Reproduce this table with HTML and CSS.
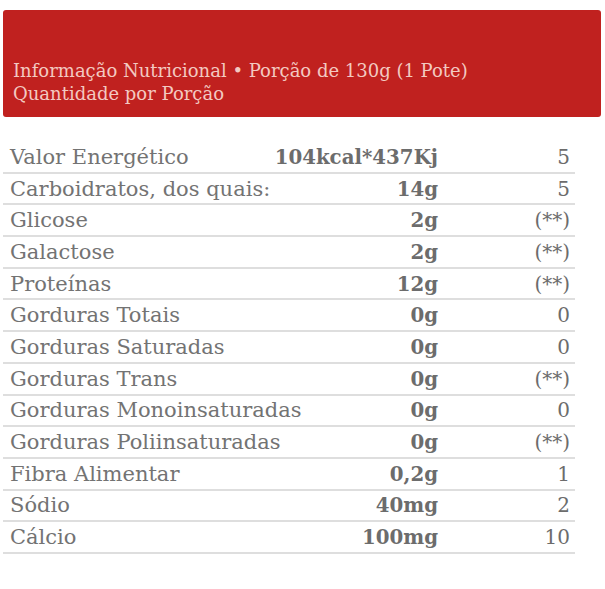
FILE: index.html
```html
<!DOCTYPE html>
<html lang="pt">
<head>
<meta charset="utf-8">
<link rel="stylesheet" href="styles.css">
</head>
<body>
<div class="panel">
  <div class="head">
    <div class="head-line">Informação Nutricional • Porção de 130g (1 Pote)</div>
    <div class="head-line">Quantidade por Porção</div>
  </div>
  <div class="rows">
    <div class="row"><span class="name">Valor Energético</span><span class="val">104kcal*437Kj</span><span class="pct">5</span></div>
    <div class="row"><span class="name">Carboidratos, dos quais:</span><span class="val">14g</span><span class="pct">5</span></div>
    <div class="row"><span class="name">Glicose</span><span class="val">2g</span><span class="pct">(**)</span></div>
    <div class="row"><span class="name">Galactose</span><span class="val">2g</span><span class="pct">(**)</span></div>
    <div class="row"><span class="name">Proteínas</span><span class="val">12g</span><span class="pct">(**)</span></div>
    <div class="row"><span class="name">Gorduras Totais</span><span class="val">0g</span><span class="pct">0</span></div>
    <div class="row"><span class="name">Gorduras Saturadas</span><span class="val">0g</span><span class="pct">0</span></div>
    <div class="row"><span class="name">Gorduras Trans</span><span class="val">0g</span><span class="pct">(**)</span></div>
    <div class="row"><span class="name">Gorduras Monoinsaturadas</span><span class="val">0g</span><span class="pct">0</span></div>
    <div class="row"><span class="name">Gorduras Poliinsaturadas</span><span class="val">0g</span><span class="pct">(**)</span></div>
    <div class="row"><span class="name">Fibra Alimentar</span><span class="val">0,2g</span><span class="pct">1</span></div>
    <div class="row"><span class="name">Sódio</span><span class="val">40mg</span><span class="pct">2</span></div>
    <div class="row"><span class="name">Cálcio</span><span class="val">100mg</span><span class="pct">10</span></div>
  </div>
</div>
</body>
</html>
```
FILE: styles.css
```css
html, body {
  margin: 0;
  padding: 0;
  background: #ffffff;
}
body {
  font-family: "DejaVu Serif", "Liberation Serif", serif;
  width: 605px;
  height: 589px;
  overflow: hidden;
}
.panel {
  padding: 10px 4px 0 3px;
}
.head {
  background: #c0211f;
  border-radius: 3px;
  height: 107px;
  box-sizing: border-box;
  padding: 49px 0 0 10px;
  color: #f3c9c1;
  font-size: 18px;
  line-height: 23px;
}
.rows {
  margin-top: 25px;
  width: 572px;
}
.row {
  display: grid;
  grid-template-columns: minmax(0, 1fr) 170px 137px;
  align-items: center;
  height: 31.7px;
  box-sizing: border-box;
  border-bottom: 2px solid #dedede;
  font-size: 21px;
  color: #737373;
}
.name {
  padding-left: 7px;
  white-space: nowrap;
}
.val {
  text-align: right;
  font-weight: bold;
  font-size: 19.8px;
  color: #6c6c6c;
  white-space: nowrap;
}
.pct {
  text-align: right;
  padding-right: 5px;
  font-size: 20px;
  color: #6c6c6c;
}
```
